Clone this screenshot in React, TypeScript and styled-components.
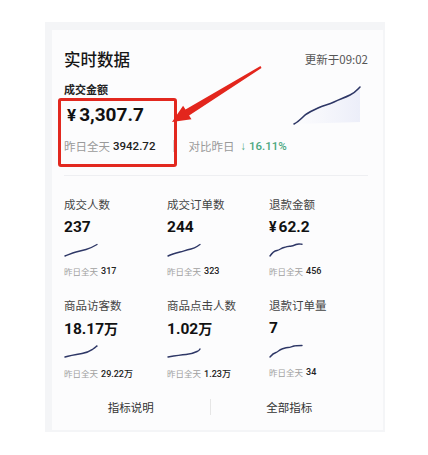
import React from 'react';
import styled, { createGlobalStyle } from 'styled-components';

const GlobalStyle = createGlobalStyle`
  body {
    margin: 0;
    background: #ffffff;
    font-family: 'Noto Sans CJK SC', 'Noto Sans', sans-serif;
    color: #1a1a1a;
  }
`;

type Metric = {
  label: string;
  value: string;
  currency?: boolean;
  unit?: string;
  yesterday: string;
  yesterdayUnit?: string;
  line: string;
};

const metrics: Metric[] = [
  {
    label: '成交人数',
    value: '237',
    yesterday: '317',
    line: 'M1 13 C5 11.5 8 10 12 9 S18 7.5 22 6.5 S28 4.5 33 1.5',
  },
  {
    label: '成交订单数',
    value: '244',
    yesterday: '323',
    line: 'M1 13 C5 11 9 10 13 9 S19 7 24 6 S29 4 33 1.5',
  },
  {
    label: '退款金额',
    value: '62.2',
    currency: true,
    yesterday: '456',
    line: 'M1 13 C3 10 5 8 8 7.5 S12 5 15 4.5 S19 3 21 3.2 S25 2.5 27 1.5 S31 1 33 1.2',
  },
  {
    label: '商品访客数',
    value: '18.17',
    unit: '万',
    yesterday: '29.22',
    yesterdayUnit: '万',
    line: 'M1 12 C6 10.5 12 9.5 18 8.5 S26 6 29 4 S32 1.5 33 1',
  },
  {
    label: '商品点击人数',
    value: '1.02',
    unit: '万',
    yesterday: '1.23',
    yesterdayUnit: '万',
    line: 'M1 12 C7 11 13 10 19 9.5 S27 8 30 6.5 S32 5 33 4',
  },
  {
    label: '退款订单量',
    value: '7',
    yesterday: '34',
    line: 'M1 13 C3 10.5 5 9 7 8.5 S10 6 13 5 S17 3.5 19 3.5 S23 2.5 25 2 S30 1.5 33 1.5',
  },
];

const App = () => (
  <Page>
    <GlobalStyle />
    <Frame>
      <Card>
        <Header>
          <Title>实时数据</Title>
          <Updated>更新于09:02</Updated>
        </Header>

        <MainRow>
          <MainInfo>
            <MainLabel>成交金额</MainLabel>
            <Amount>
              <Yen>¥</Yen>3,307.7
            </Amount>
            <CompareRow>
              <Muted>昨日全天</Muted>
              <SmallNumber>3942.72</SmallNumber>
              <VSep />
              <Muted>对比昨日</Muted>
              <Change>↓ 16.11%</Change>
            </CompareRow>
          </MainInfo>
          <MainChart width="70" height="42" viewBox="0 0 70 42">
            <defs>
              <linearGradient id="areaFill" x1="0" y1="0" x2="1" y2="0">
                <stop offset="0" stopColor="#eef0fa" stopOpacity="0" />
                <stop offset="1" stopColor="#eceef9" stopOpacity="1" />
              </linearGradient>
            </defs>
            <path
              d="M2 40 C6 38 9 35 12 32 S20 27 26 24 S36 21 42 18 S52 14 58 11 S65 6 68 3 L68 38 L2 40 Z"
              fill="url(#areaFill)"
            />
            <path
              d="M2 40 C6 38 9 35 12 32 S20 27 26 24 S36 21 42 18 S52 14 58 11 S65 6 68 3"
              fill="none"
              stroke="#2e3766"
              strokeWidth="1.6"
              strokeLinecap="round"
            />
          </MainChart>
        </MainRow>

        <Divider />

        <Grid>
          {metrics.map((m) => (
            <Cell key={m.label}>
              <CellLabel>{m.label}</CellLabel>
              <CellValue>
                {m.currency && <SmallYen>¥</SmallYen>}
                {m.value}
                {m.unit && <Unit>{m.unit}</Unit>}
              </CellValue>
              <Spark width="34" height="14" viewBox="0 0 34 14">
                <path d={m.line} fill="none" stroke="#2e3766" strokeWidth="1.4" strokeLinecap="round" />
              </Spark>
              <CellFoot>
                <FootMuted>昨日全天</FootMuted>
                <FootValue>
                  {m.yesterday}
                  {m.yesterdayUnit && <FootUnit>{m.yesterdayUnit}</FootUnit>}
                </FootValue>
              </CellFoot>
            </Cell>
          ))}
        </Grid>

        <Footer>
          <FooterButton>指标说明</FooterButton>
          <FooterSep />
          <FooterButton>全部指标</FooterButton>
        </Footer>

        <HighlightBox />
        <Arrow width="108" height="70" viewBox="162 60 108 70">
          <polygon
            points="260.5,66.1 185.5,109.5 183.1,105.7 172,122 191.5,119.3 189.1,115.5 261.5,67.9"
            fill="#e3261d"
          />
        </Arrow>
      </Card>
    </Frame>
  </Page>
);

const Page = styled.div`
  padding: 22px 0 0 45px;
`;

const Frame = styled.div`
  box-sizing: border-box;
  width: 340px;
  height: 410px;
  padding: 8px 2px 2px 7px;
  background: #f4f5f7;
`;

const Card = styled.div`
  position: relative;
  box-sizing: border-box;
  height: 100%;
  background: #fcfcfd;
  display: flex;
  flex-direction: column;
  padding-top: 17px;
`;

const Header = styled.div`
  display: flex;
  align-items: center;
  justify-content: space-between;
  height: 24px;
  padding: 0 15px 0 12px;
`;

const Title = styled.div`
  font-size: 16.5px;
  font-weight: 500;
  color: #161616;
`;

const Updated = styled.div`
  font-size: 11.5px;
  color: #555;
`;

const MainRow = styled.div`
  display: flex;
  justify-content: space-between;
  align-items: flex-start;
  padding: 0 21px 0 12px;
  margin-top: 10px;
`;

const MainInfo = styled.div`
  display: flex;
  flex-direction: column;
`;

const MainLabel = styled.div`
  font-size: 11px;
  line-height: 16px;
  font-weight: 700;
  color: #222;
`;

const Amount = styled.div`
  margin-top: 6px;
  padding-left: 3px;
  font-family: Roboto, 'Noto Sans CJK SC', sans-serif;
  font-size: 19px;
  line-height: 24px;
  font-weight: 700;
  color: #111;
`;

const Yen = styled.span`
  margin-right: 3px;
  font-size: 17px;
`;

const SmallYen = styled.span`
  margin-right: 2px;
  font-size: 14px;
`;

const CompareRow = styled.div`
  display: flex;
  align-items: center;
  margin-top: 11px;
  height: 16px;
  font-size: 11.5px;
`;

const Muted = styled.span`
  color: #9a9a9a;
`;

const SmallNumber = styled.span`
  margin-left: 3px;
  font-family: Roboto, sans-serif;
  font-weight: 500;
  color: #222;
`;

const VSep = styled.span`
  width: 1px;
  height: 12px;
  margin: 0 14px 0 18px;
  background: #d8d8d8;
`;

const Change = styled.span`
  margin-left: 6px;
  font-family: Roboto, sans-serif;
  font-weight: 500;
  color: #4aa77f;
`;

const MainChart = styled.svg`
  display: block;
  margin-top: 3px;
`;

const Divider = styled.div`
  height: 1px;
  margin: 21px 15px 0 12px;
  background: #eeeff2;
`;

const Grid = styled.div`
  display: grid;
  grid-template-columns: 103px 102px 1fr;
  row-gap: 20px;
  padding: 0 15px 0 12px;
  margin-top: 20px;
`;

const Cell = styled.div`
  display: flex;
  flex-direction: column;
  align-items: flex-start;
`;

const CellLabel = styled.div`
  font-size: 11.5px;
  line-height: 16px;
  color: #444;
`;

const CellValue = styled.div`
  margin-top: 5px;
  font-family: Roboto, 'Noto Sans CJK SC', sans-serif;
  font-size: 15.5px;
  line-height: 20px;
  font-weight: 700;
  color: #111;
`;

const Unit = styled.span`
  font-family: 'Noto Sans CJK SC', sans-serif;
  font-size: 14px;
  font-weight: 700;
`;

const Spark = styled.svg`
  display: block;
  margin-top: 6px;
`;

const CellFoot = styled.div`
  display: flex;
  align-items: center;
  margin-top: 8px;
  height: 12px;
  font-size: 8.5px;
`;

const FootMuted = styled.span`
  color: #a0a0a0;
`;

const FootValue = styled.span`
  margin-left: 3px;
  font-family: Roboto, 'Noto Sans CJK SC', sans-serif;
  font-size: 9px;
  font-weight: 500;
  color: #222;
`;

const FootUnit = styled.span`
  font-family: 'Noto Sans CJK SC', sans-serif;
`;

const Footer = styled.div`
  display: flex;
  align-items: center;
  height: 28px;
  margin-top: 14px;
  padding-right: 15px;
`;

const FooterButton = styled.div`
  flex: 1;
  text-align: center;
  font-size: 11.5px;
  color: #333;
`;

const FooterSep = styled.div`
  width: 1px;
  height: 16px;
  background: #e6e6e6;
`;

const HighlightBox = styled.div`
  position: absolute;
  left: 6px;
  top: 68px;
  width: 119px;
  height: 69px;
  box-sizing: border-box;
  border: 3px solid #e2281f;
  border-radius: 3px;
  pointer-events: none;
`;

const Arrow = styled.svg`
  position: absolute;
  left: 110px;
  top: 30px;
  pointer-events: none;
`;

export default App;
